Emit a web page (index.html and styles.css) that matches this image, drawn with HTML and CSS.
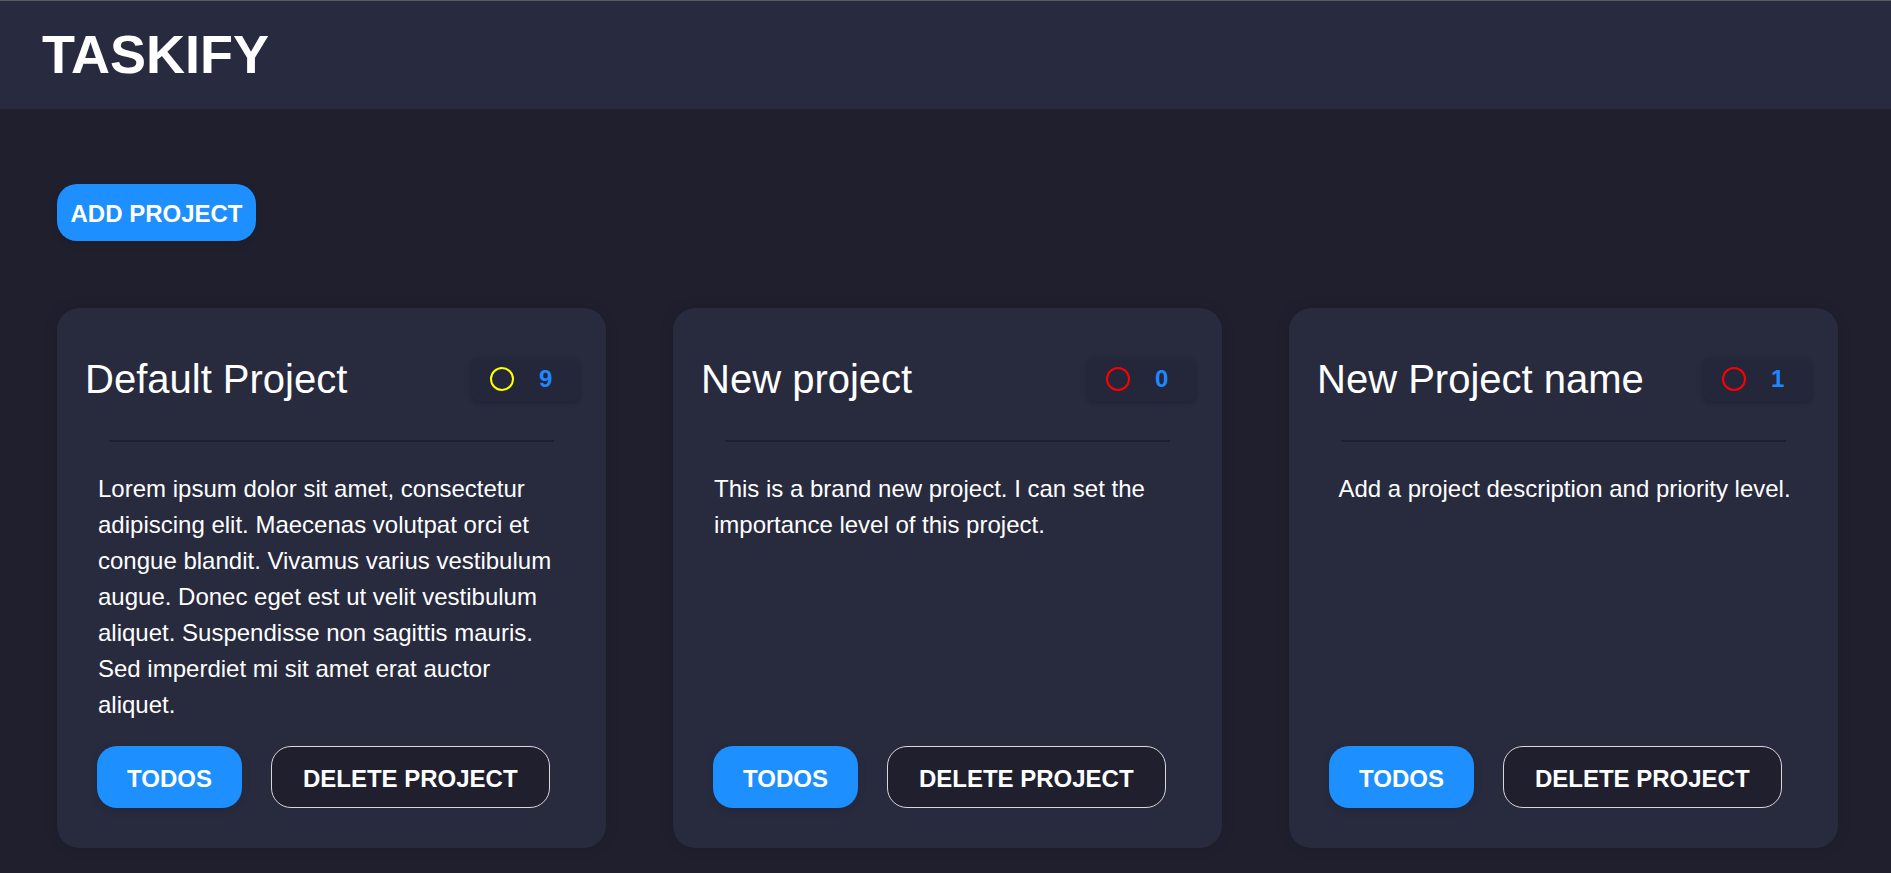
FILE: index.html
```html
<!DOCTYPE html>
<html lang="en">
<head>
<meta charset="utf-8">
<title>Taskify</title>
<link rel="stylesheet" href="styles.css">
</head>
<body>
<header class="topbar">
  <h1 class="logo">TASKIFY</h1>
</header>
<main class="main">
  <button class="btn btn-add">ADD PROJECT</button>
  <section class="grid">
    <article class="card">
      <div class="card-head">
        <h2 class="card-title">Default Project</h2>
        <div class="badge"><span class="dot dot-yellow"></span><span class="count">9</span></div>
      </div>
      <hr class="divider">
      <p class="desc">Lorem ipsum dolor sit amet, consectetur adipiscing elit. Maecenas volutpat orci et congue blandit. Vivamus varius vestibulum augue. Donec eget est ut velit vestibulum aliquet. Suspendisse non sagittis mauris. Sed imperdiet mi sit amet erat auctor aliquet.</p>
      <div class="actions">
        <button class="btn btn-todos">TODOS</button>
        <button class="btn btn-delete">DELETE PROJECT</button>
      </div>
    </article>
    <article class="card">
      <div class="card-head">
        <h2 class="card-title">New project</h2>
        <div class="badge"><span class="dot dot-red"></span><span class="count">0</span></div>
      </div>
      <hr class="divider">
      <p class="desc">This is a brand new project. I can set the importance level of this project.</p>
      <div class="actions">
        <button class="btn btn-todos">TODOS</button>
        <button class="btn btn-delete">DELETE PROJECT</button>
      </div>
    </article>
    <article class="card">
      <div class="card-head">
        <h2 class="card-title">New Project name</h2>
        <div class="badge"><span class="dot dot-red"></span><span class="count">1</span></div>
      </div>
      <hr class="divider">
      <p class="desc">Add a project description and priority level.</p>
      <div class="actions">
        <button class="btn btn-todos">TODOS</button>
        <button class="btn btn-delete">DELETE PROJECT</button>
      </div>
    </article>
  </section>
</main>
</body>
</html>
```
FILE: styles.css
```css
* { box-sizing: border-box; }

html, body {
  margin: 0;
  padding: 0;
}

body {
  background: #1f1f2e;
  color: #ffffff;
  font-family: "Liberation Sans", Arial, sans-serif;
  min-height: 873px;
}

.topbar {
  height: 109px;
  background: #282a3f;
  border-top: 1px solid #5b5b5b;
  display: flex;
  align-items: center;
  padding-left: 42px;
}

.logo {
  margin: 0;
  font-size: 54px;
  font-weight: 700;
  line-height: 1;
  padding-bottom: 2px;
}

.main {
  padding: 75px 53px 0 57px;
  display: flex;
  flex-direction: column;
  align-items: flex-start;
}

.btn {
  font-family: "Liberation Sans", Arial, sans-serif;
  font-weight: 700;
  font-size: 24px;
  color: #ffffff;
  cursor: pointer;
  border: none;
}

.btn-add {
  height: 57px;
  width: 199px;
  padding: 2px 0 0;
  background: #1e8ffe;
  border-radius: 20px;
  box-shadow: 0 2px 8px rgba(0, 0, 0, 0.15);
}

.grid {
  margin-top: 67px;
  width: 100%;
  display: grid;
  grid-template-columns: repeat(3, 1fr);
  gap: 67px;
}

.card {
  background: #282a3e;
  border-radius: 22px;
  padding: 49px 26px 40px 28px;
  display: flex;
  flex-direction: column;
  box-shadow: 0 0 14px rgba(0, 0, 0, 0.12);
}

.card-head {
  display: flex;
  align-items: center;
  justify-content: space-between;
  height: 44px;
}

.card-title {
  margin: 0;
  font-size: 40px;
  font-weight: 400;
  line-height: 44px;
}

.badge {
  height: 44px;
  width: 109px;
  display: flex;
  align-items: center;
  gap: 25px;
  padding-left: 19px;
  background: #24263a;
  border-radius: 8px;
  box-shadow: 0 2px 5px rgba(0, 0, 0, 0.2);
}

.dot {
  width: 24px;
  height: 24px;
  border-radius: 50%;
  border: 2px solid #ffff00;
}

.dot-yellow { border-color: #ffff00; }
.dot-red { border-color: #ff0000; }

.count {
  font-size: 24px;
  font-weight: 700;
  color: #1e88ff;
  line-height: 1;
}

.divider {
  margin: 39px 26px 0 24px;
  border: none;
  height: 2px;
  background: #1e1f2d;
}

.desc {
  align-self: center;
  margin: 29px 13px 23px 13px;
  font-size: 24px;
  line-height: 36px;
}

.actions {
  margin-top: auto;
  display: flex;
  gap: 29px;
  padding-left: 12px;
}

.btn-todos {
  height: 62px;
  padding: 4px 30px 0;
  background: #1e8ffe;
  border-radius: 20px;
  box-shadow: 0 2px 10px rgba(0, 0, 0, 0.12);
}

.btn-delete {
  height: 62px;
  padding: 4px 31px 0;
  background: #1f1f2e;
  border: 1px solid #d8d8d8;
  border-radius: 20px;
}
```
